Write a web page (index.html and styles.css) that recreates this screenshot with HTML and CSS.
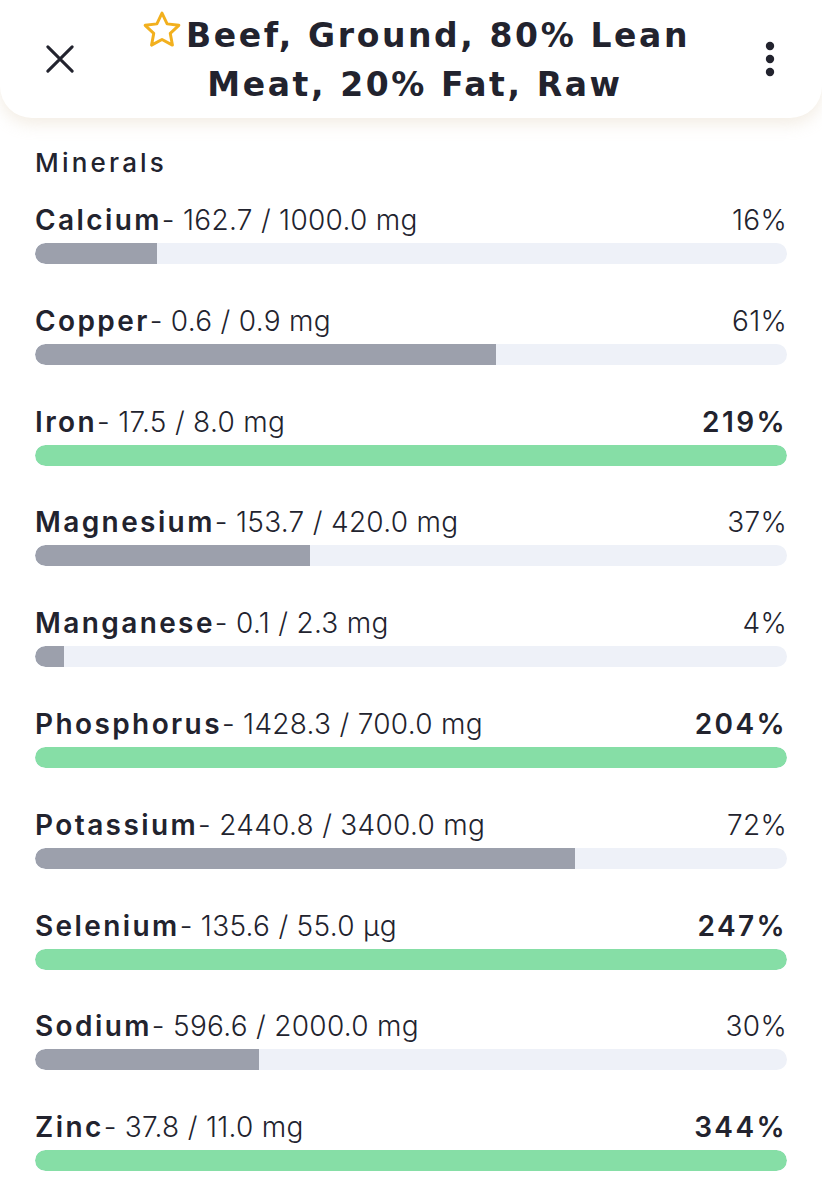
FILE: index.html
```html
<!DOCTYPE html>
<html>
<head>
  <title>Beef, Ground, 80% Lean Meat, 20% Fat, Raw</title>
  <link rel="stylesheet" href="styles.css">
</head>
<body>

  <header class="topbar">
    <button class="icon-btn" aria-label="Close">
      <svg width="28" height="28" viewBox="0 0 30 30"><path d="M2 2L28 28M28 2L2 28" stroke="#22232e" stroke-width="3.2" stroke-linecap="round" fill="none"/></svg>
    </button>
    <h1 class="title">
      <svg class="star" width="44" height="44" viewBox="0 0 24 24"><path d="M12 2.2l2.8 5.9 6.4.8-4.7 4.4 1.2 6.4L12 16.6l-5.7 3.1 1.2-6.4-4.7-4.4 6.4-.8z" stroke="#f2b01e" stroke-width="1.6" stroke-linejoin="round" fill="none"/></svg>Beef, Ground, 80% Lean<br>Meat, 20% Fat, Raw
    </h1>
    <button class="icon-btn" aria-label="More">
      <svg width="10" height="36" viewBox="0 0 10 36"><circle cx="5" cy="5" r="4.2" fill="#22232e"/><circle cx="5" cy="18" r="4.2" fill="#22232e"/><circle cx="5" cy="31" r="4.2" fill="#22232e"/></svg>
    </button>
  </header>

  <section class="nutrients">
    <h3>Minerals</h3>

    <div class="row">
      <div class="line"><span><b>Calcium</b>- 162.7 / 1000.0 mg</span><span>16%</span></div>
      <div class="track"><div class="fill" style="width: 16.2%"></div></div>
    </div>
    <div class="row">
      <div class="line"><span><b>Copper</b>- 0.6 / 0.9 mg</span><span>61%</span></div>
      <div class="track"><div class="fill" style="width: 61.3%"></div></div>
    </div>
    <div class="row">
      <div class="line"><span><b>Iron</b>- 17.5 / 8.0 mg</span><b>219%</b></div>
      <div class="track"><div class="fill done" style="width: 100%"></div></div>
    </div>
    <div class="row">
      <div class="line"><span><b>Magnesium</b>- 153.7 / 420.0 mg</span><span>37%</span></div>
      <div class="track"><div class="fill" style="width: 36.6%"></div></div>
    </div>
    <div class="row">
      <div class="line"><span><b>Manganese</b>- 0.1 / 2.3 mg</span><span>4%</span></div>
      <div class="track"><div class="fill" style="width: 3.9%"></div></div>
    </div>
    <div class="row">
      <div class="line"><span><b>Phosphorus</b>- 1428.3 / 700.0 mg</span><b>204%</b></div>
      <div class="track"><div class="fill done" style="width: 100%"></div></div>
    </div>
    <div class="row">
      <div class="line"><span><b>Potassium</b>- 2440.8 / 3400.0 mg</span><span>72%</span></div>
      <div class="track"><div class="fill" style="width: 71.8%"></div></div>
    </div>
    <div class="row">
      <div class="line"><span><b>Selenium</b>- 135.6 / 55.0 µg</span><b>247%</b></div>
      <div class="track"><div class="fill done" style="width: 100%"></div></div>
    </div>
    <div class="row">
      <div class="line"><span><b>Sodium</b>- 596.6 / 2000.0 mg</span><span>30%</span></div>
      <div class="track"><div class="fill" style="width: 29.8%"></div></div>
    </div>
    <div class="row">
      <div class="line"><span><b>Zinc</b>- 37.8 / 11.0 mg</span><b>344%</b></div>
      <div class="track"><div class="fill done" style="width: 100%"></div></div>
    </div>
  </section>

</body>
</html>
```

FILE: styles.css
```css
body {
  margin: 0;
  background: #ffffff;
  color: #22232e;
  font-family: Inter, "Noto Sans", sans-serif;
}

.topbar {
  display: flex;
  align-items: center;
  height: 118px;
  padding: 0 32px 0 40px;
  box-sizing: border-box;
  background: #ffffff;
  border-radius: 0 0 32px 32px;
  box-shadow: 0 6px 16px rgba(215, 195, 165, 0.3);
}

.icon-btn {
  display: flex;
  align-items: center;
  justify-content: center;
  width: 40px;
  padding: 0;
  border: none;
  background: none;
}

.title {
  flex: 1;
  margin: 0;
  text-align: center;
  font-family: "DejaVu Sans", Inter, sans-serif;
  font-size: 33px;
  font-weight: 700;
  letter-spacing: 2.6px;
  line-height: 49px;
  color: #22232e;
}

.star {
  vertical-align: -6px;
  margin-right: 2px;
}

.nutrients {
  padding: 28px 35px 0 35px;
}

.nutrients h3 {
  margin: 0 0 22px 0;
  font-size: 26px;
  font-weight: 500;
  letter-spacing: 3.2px;
  line-height: 34px;
}

.row {
  margin-bottom: 38.8px;
}

.line {
  display: flex;
  justify-content: space-between;
  font-size: 28px;
  font-weight: 300;
  letter-spacing: 0.3px;
  line-height: 36px;
}

.line b {
  font-weight: 600;
  letter-spacing: 2.4px;
}

.track {
  margin-top: 5px;
  height: 21px;
  background: #eef1f8;
  border-radius: 11px;
  overflow: hidden;
}

.fill {
  height: 100%;
  background: #9ca0ac;
  border-radius: 11px 0 0 11px;
}

.fill.done {
  background: #86dea6;
  border-radius: 11px;
}
```
